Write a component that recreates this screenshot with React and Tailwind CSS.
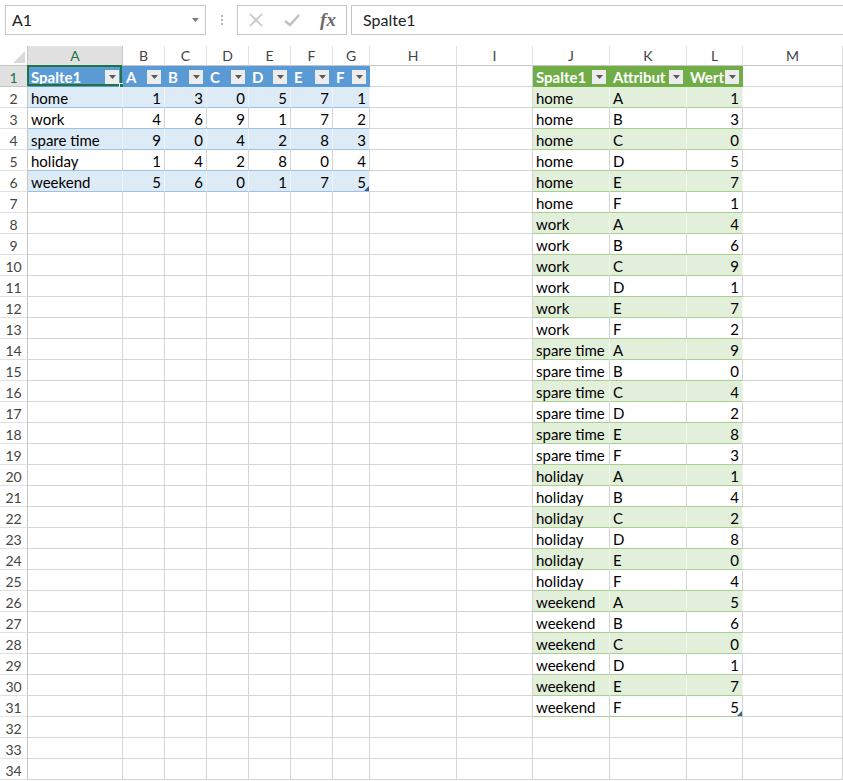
const LETTERS = ["A", "B", "C", "D", "E", "F", "G", "H", "I", "J", "K", "L", "M"];
const NAMES = ["home", "work", "spare time", "holiday", "weekend"];
const ATTRS = ["A", "B", "C", "D", "E", "F"];
const VALUES = [
  [1, 3, 0, 5, 7, 1],
  [4, 6, 9, 1, 7, 2],
  [9, 0, 4, 2, 8, 3],
  [1, 4, 2, 8, 0, 4],
  [5, 6, 0, 1, 7, 5],
];

const LONG = NAMES.flatMap((n, i) => ATTRS.map((a, j) => [n, a, VALUES[i][j]]));

const Drop = () => (
  <span className="flex h-[14px] w-[14px] shrink-0 items-center justify-center bg-[#ececec]">
    <svg width="7" height="4" viewBox="0 0 7 4">
      <path d="M0 0h7L3.5 4z" fill="#595959" />
    </svg>
  </span>
);

const ResizeMark = () => (
  <svg className="absolute bottom-0 right-0" width="5" height="5" viewBox="0 0 5 5">
    <path d="M5 0V5H0z" fill="#3b5e8c" />
  </svg>
);

const FormulaBar = () => (
  <div className="flex h-[46px] items-start pl-[5px] pt-[5px] bg-white">
    <div className="flex h-[30px] w-[201px] items-center justify-between border border-[#c6c6c6] pl-[6px] pr-[6px] text-[16px] text-[#222]">
      <span>A1</span>
      <svg width="7" height="4" viewBox="0 0 7 4">
        <path d="M0 0h7L3.5 4z" fill="#7a7a7a" />
      </svg>
    </div>
    <div className="flex h-[30px] w-[31px] flex-col items-center justify-center gap-[2px]">
      <span className="h-[2px] w-[2px] bg-[#b5b5b5]" />
      <span className="h-[2px] w-[2px] bg-[#b5b5b5]" />
      <span className="h-[2px] w-[2px] bg-[#b5b5b5]" />
    </div>
    <div className="flex h-[30px] w-[110px] items-center border border-[#c6c6c6]">
      <span className="flex w-[36px] justify-center">
        <svg width="16" height="16" viewBox="0 0 16 16">
          <path d="M2 2L14 14M14 2L2 14" stroke="#c2c2c2" strokeWidth="1.6" />
        </svg>
      </span>
      <span className="flex w-[36px] justify-center">
        <svg width="18" height="16" viewBox="0 0 18 16">
          <path d="M2 9L7 13L16 3" stroke="#c2c2c2" strokeWidth="2.6" fill="none" />
        </svg>
      </span>
      <span className="flex w-[36px] justify-center font-['Liberation_Serif',serif] text-[19px] font-bold italic text-[#6b6b6b]">
        fx
      </span>
    </div>
    <div className="ml-[4px] flex h-[30px] flex-1 items-center border-y border-l border-[#c6c6c6] pl-[11px] text-[16px] text-[#222]">
      Spalte1
    </div>
  </div>
);

function Cell({ r, c }) {
  const base =
    "relative flex items-center overflow-visible whitespace-nowrap border-r border-b pt-[2px] text-[15px] leading-none text-black";
  const inT1 = r <= 6 && c <= 6;
  const inT2 = r <= 31 && c >= 9 && c <= 11;

  if (inT1 && r === 1) {
    const label = ["Spalte1", "A", "B", "C", "D", "E", "F"][c];
    return (
      <div className={`${base} justify-between bg-[#5b9bd5] border-r-[#5b9bd5] border-b-[#5b9bd5] pl-[3px] pr-[3px] font-bold text-white`}>
        <span>{label}</span>
        <Drop />
        {c === 0 && (
          <>
            <span className="pointer-events-none absolute -left-[1px] -top-[1px] bottom-0 right-0 border-2 border-[#217346]" />
            <span className="absolute -bottom-[4px] -right-[4px] h-[7px] w-[7px] border border-white bg-[#217346]" />
          </>
        )}
      </div>
    );
  }
  if (inT1) {
    const band = r % 2 === 0;
    const text = c === 0 ? NAMES[r - 2] : VALUES[r - 2][c - 1];
    return (
      <div
        className={`${base} border-b-[#9bc2e6] ${
          band ? "bg-[#ddebf7] border-r-[#eef4fb]" : "bg-white border-r-[#d4d4d4]"
        } ${c === 0 ? "justify-start pl-[3px]" : "justify-end pr-[3px]"}`}
      >
        {text}
        {r === 6 && c === 6 && <ResizeMark />}
      </div>
    );
  }
  if (inT2 && r === 1) {
    const label = ["Spalte1", "Attribut", "Wert"][c - 9];
    return (
      <div className={`${base} justify-between bg-[#70ad47] border-r-[#70ad47] border-b-[#70ad47] pl-[3px] pr-[3px] font-bold text-white`}>
        <span>{label}</span>
        <Drop />
      </div>
    );
  }
  if (inT2) {
    const band = r % 2 === 0;
    const row = LONG[r - 2];
    const text = row[c - 9];
    return (
      <div
        className={`${base} border-b-[#a9d08e] ${
          band ? "bg-[#e2efda] border-r-[#f1f7ed]" : "bg-white border-r-[#d4d4d4]"
        } ${c === 11 ? "justify-end pr-[3px]" : "justify-start pl-[3px]"}`}
      >
        {text}
        {r === 31 && c === 11 && <ResizeMark />}
      </div>
    );
  }
  return <div className={`${base} bg-white border-r-[#d4d4d4] border-b-[#d4d4d4]`} />;
}

export default function App() {
  const rows = Array.from({ length: 34 }, (_, i) => i + 1);
  return (
    <div className="h-[781px] w-[843px] overflow-hidden bg-white font-['Lato','Noto_Sans',sans-serif]">
      <FormulaBar />
      <div className="grid grid-cols-[28px_95px_42px_42px_42px_42px_42px_37px_87px_76px_77px_77px_56px_100px] grid-rows-[20px_repeat(34,21px)]">
        <div className="flex items-end justify-end border-r border-b border-r-[#c6c6c6] border-b-[#c6c6c6] bg-white p-[2px]">
          <svg width="12" height="12" viewBox="0 0 12 12">
            <path d="M12 0V12H0z" fill="#dadada" />
          </svg>
        </div>
        {LETTERS.map((l, i) => (
          <div
            key={l}
            className={`flex items-center justify-center border-r border-b text-[14px] ${
              i === 0
                ? "bg-[#e1e1e1] text-[#217346] border-r-[#c6c6c6] border-b-[#ababab]"
                : "bg-white text-[#444] border-r-[#e1e1e1] border-b-[#c6c6c6]"
            }`}
          >
            {l}
          </div>
        ))}
        {rows.map((r) => [
          <div
            key={`h${r}`}
            className={`flex items-center justify-center border-r border-b pt-[2px] text-[14px] ${
              r === 1
                ? "bg-[#e1e1e1] text-[#217346] border-r-[#ababab] border-b-[#c6c6c6]"
                : "bg-white text-[#444] border-r-[#c6c6c6] border-b-[#e1e1e1]"
            }`}
          >
            {r}
          </div>,
          ...LETTERS.map((_, c) => <Cell key={`${r}-${c}`} r={r} c={c} />),
        ])}
      </div>
    </div>
  );
}
